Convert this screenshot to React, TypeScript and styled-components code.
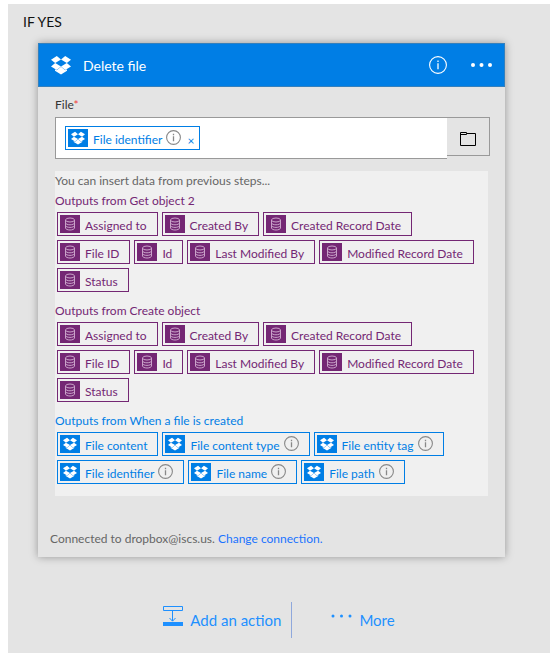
import React from "react";
import styled, { createGlobalStyle } from "styled-components";

const BLUE = "#007ee5";
const PURPLE = "#742774";
const LINK = "#1e90ff";

const GlobalStyle = createGlobalStyle`
  * { box-sizing: border-box; }
  body {
    margin: 0;
    background: #fff;
    font-family: Lato, "Open Sans", sans-serif;
    font-size: 12px;
    line-height: 20px;
    color: #333;
  }
  button { font: inherit; color: inherit; background: none; border: 0; padding: 0; cursor: pointer; }
  svg { display: block; flex: none; }
`;

const Branch = styled.main`
  margin: 4px 7px 4px 8px;
  padding: 8px 45px 15px 30px;
  background: #e4e4e4;
`;

const BranchTitle = styled.h1`
  margin: 0 0 11px -15px;
  font-size: 14px;
  line-height: 20px;
  font-weight: 400;
  color: #111;
`;

const Card = styled.section`
  background: #e4e4e4;
  box-shadow: 0 0 8px rgba(0, 0, 0, 0.35);
`;

const CardHeader = styled.header`
  display: flex;
  align-items: center;
  height: 44px;
  padding: 0 12px;
  border: 1px solid #3480bd;
  background: ${BLUE};
  color: #fff;
`;

const CardTitle = styled.h2`
  flex: 1;
  margin: 0 0 0 12px;
  font-size: 14px;
  line-height: 20px;
  padding-top: 2px;
  font-weight: 400;
`;

const HeaderButton = styled.button`
  margin-left: 24px;
`;

const CardBody = styled.div`
  padding: 8px 15px 0 17px;
`;

const FieldLabel = styled.label`
  display: block;
  line-height: 20px;
  margin-bottom: 2px;
`;

const Required = styled.span`
  color: #f04040;
`;

const FieldRow = styled.div`
  display: flex;
  align-items: flex-start;
`;

const FieldBox = styled.div`
  flex: 1;
  display: flex;
  align-items: center;
  min-width: 0;
  height: 42px;
  padding: 0 9px;
  border: 1px solid #999;
  border-right: 0;
  background: #fff;
`;

const FieldInput = styled.input`
  flex: 1;
  min-width: 0;
  border: 0;
  outline: 0;
  background: transparent;
  font: inherit;
`;

const BrowseButton = styled.button`
  display: flex;
  align-items: center;
  justify-content: center;
  width: 43px;
  height: 39px;
  padding-top: 4px;
  border: 1px solid #999;
  border-left: 0;
`;

const Outputs = styled.div`
  margin: 12px 2px 0 0;
  padding-bottom: 12px;
  background: #f0f0f0;
`;

const Hint = styled.p`
  margin: 0;
  color: #666;
`;

const Group = styled.section<{ $color: string }>`
  color: ${(p) => p.$color};
  & + & { margin-top: 9px; }
`;

const GroupTitle = styled.h3`
  margin: 0 0 1px;
  font-size: 12px;
  line-height: 20px;
  font-weight: 400;
`;

const TokenList = styled.div`
  display: flex;
  flex-wrap: wrap;
  gap: 4px;
  padding: 0 2px;
`;

const Token = styled.button`
  display: flex;
  height: 24px;
  padding: 2px 10px 2px 2px;
  border: 1px solid currentColor;
`;

const FieldToken = styled.span`
  display: flex;
  height: 24px;
  padding: 2px 5px 2px 2px;
  border: 1px solid currentColor;
  color: ${BLUE};
`;

const TokenIcon = styled.span<{ $color: string }>`
  display: flex;
  align-items: center;
  justify-content: center;
  width: 20px;
  height: 18px;
  margin-right: 5px;
  background: ${(p) => p.$color};
`;

const TokenText = styled.span`
  padding-top: 1px;
  line-height: 20px;
  white-space: nowrap;
`;

const TokenInfo = styled.span`
  margin: 1px 0 0 4px;
  color: #888;
`;

const RemoveButton = styled.button`
  margin-left: 6px;
  padding-top: 2px;
  line-height: 20px;
`;

const Connection = styled.footer`
  padding: 33px 12px 8px;
  color: #666;
`;

const ChangeLink = styled.a`
  color: #1a73ff;
  text-decoration: none;
`;

const Actions = styled.nav`
  display: flex;
  justify-content: center;
  margin: 45px -45px 0 -30px;
  color: ${LINK};
`;

const ActionButton = styled.button`
  display: flex;
  align-items: center;
  gap: 7px;
  height: 36px;
  font-size: 15px;
  white-space: nowrap;
`;

const ActionIcon = styled.span`
  display: flex;
  margin-bottom: 8px;
`;

const Divider = styled.span`
  width: 1px;
  height: 36px;
  margin: 0 39px 0 10px;
  background: #8fa8dc;
`;

function DropboxIcon({ size }: { size: number }) {
  return (
    <svg width={size} height={size} viewBox="0 0 20 20" fill="#fff" aria-hidden="true">
      <path d="M5.8 1 10 4.5 4.2 8.1 0 4.7z" />
      <path d="M14.2 1 10 4.5 15.8 8.1 20 4.7z" />
      <path d="M0 11.4 4.2 8.1 10 11.6 5.8 15z" />
      <path d="M20 11.4 15.8 8.1 10 11.6 14.2 15z" />
      <path d="M10 11.8 14.2 15.3 16 14.3V15.8L10 19.4 4 15.8V14.3L5.8 15.3z" />
    </svg>
  );
}

function DatabaseIcon() {
  return (
    <svg width="12" height="14" viewBox="0 0 12 14" fill="none" stroke="#c9a2c9" aria-hidden="true">
      <ellipse cx="6" cy="3" rx="4.5" ry="2" />
      <path d="M1.5 3v8c0 1.1 2 2 4.5 2s4.5-.9 4.5-2V3M1.5 5.8c0 1.1 2 2 4.5 2s4.5-.9 4.5-2M1.5 8.4c0 1.1 2 2 4.5 2s4.5-.9 4.5-2" />
    </svg>
  );
}

function InfoIcon({ size }: { size: number }) {
  return (
    <svg width={size} height={size} viewBox={`0 0 ${size} ${size}`} fill="none" stroke="currentColor" aria-hidden="true">
      <circle cx={size / 2} cy={size / 2} r={size / 2 - 0.6} strokeWidth="1.1" />
      <path
        d={size > 15 ? "M9 7.2v6M9 4.6v1.4" : "M7.5 6.2v5M7.5 3.8v1.4"}
        strokeWidth="1.3"
      />
    </svg>
  );
}

function DotsIcon({ width, radius }: { width: number; radius: number }) {
  return (
    <svg width={width} height="6" viewBox={`0 0 ${width} 6`} fill="currentColor" aria-hidden="true">
      <circle cx="2" cy="3" r={radius} />
      <circle cx={width / 2} cy="3" r={radius} />
      <circle cx={width - 2} cy="3" r={radius} />
    </svg>
  );
}

function FolderIcon() {
  return (
    <svg width="16" height="14" viewBox="0 0 16 14" fill="none" stroke="#000" aria-hidden="true">
      <path d="M.5 .5h6v1h9v12H.5zM.5 2.5h6v-1" />
    </svg>
  );
}

function AddActionIcon() {
  return (
    <svg width="20" height="20" viewBox="0 0 20 20" fill="none" stroke="currentColor" aria-hidden="true">
      <path d="M.5 .5h19v4H.5zM9.5 5v10M6.5 12l3 3.2 3-3.2" />
      <path d="M0 16h20v4H0z" fill="currentColor" stroke="none" />
    </svg>
  );
}

type Item = { name: string; info?: boolean };
type Source = { title: string; kind: "object" | "dropbox"; items: Item[] };

const objectItems: Item[] = [
  { name: "Assigned to" },
  { name: "Created By" },
  { name: "Created Record Date" },
  { name: "File ID" },
  { name: "Id" },
  { name: "Last Modified By" },
  { name: "Modified Record Date" },
  { name: "Status" },
];

const sources: Source[] = [
  { title: "Outputs from Get object 2", kind: "object", items: objectItems },
  { title: "Outputs from Create object", kind: "object", items: objectItems },
  {
    title: "Outputs from When a file is created",
    kind: "dropbox",
    items: [
      { name: "File content" },
      { name: "File content type", info: true },
      { name: "File entity tag", info: true },
      { name: "File identifier", info: true },
      { name: "File name", info: true },
      { name: "File path", info: true },
    ],
  },
];

function TokenContent({ item, kind }: { item: Item; kind: Source["kind"] }) {
  return (
    <>
      <TokenIcon $color={kind === "object" ? PURPLE : BLUE}>
        {kind === "object" ? <DatabaseIcon /> : <DropboxIcon size={14} />}
      </TokenIcon>
      <TokenText>{item.name}</TokenText>
      {item.info && (
        <TokenInfo>
          <InfoIcon size={15} />
        </TokenInfo>
      )}
    </>
  );
}

export default function App() {
  return (
    <>
      <GlobalStyle />
      <Branch>
        <BranchTitle>IF YES</BranchTitle>
        <Card>
          <CardHeader>
            <DropboxIcon size={20} />
            <CardTitle>Delete file</CardTitle>
            <HeaderButton aria-label="Information">
              <InfoIcon size={18} />
            </HeaderButton>
            <HeaderButton aria-label="Menu">
              <DotsIcon width={21} radius={2} />
            </HeaderButton>
          </CardHeader>
          <CardBody>
            <FieldLabel htmlFor="file">
              File<Required>*</Required>
            </FieldLabel>
            <FieldRow>
              <FieldBox>
                <FieldToken>
                  <TokenContent item={{ name: "File identifier", info: true }} kind="dropbox" />
                  <RemoveButton aria-label="Remove File identifier">×</RemoveButton>
                </FieldToken>
                <FieldInput id="file" type="text" />
              </FieldBox>
              <BrowseButton aria-label="Browse files">
                <FolderIcon />
              </BrowseButton>
            </FieldRow>
            <Outputs>
              <Hint>You can insert data from previous steps...</Hint>
              {sources.map((source) => (
                <Group key={source.title} $color={source.kind === "object" ? PURPLE : BLUE}>
                  <GroupTitle>{source.title}</GroupTitle>
                  <TokenList>
                    {source.items.map((item) => (
                      <Token key={item.name}>
                        <TokenContent item={item} kind={source.kind} />
                      </Token>
                    ))}
                  </TokenList>
                </Group>
              ))}
            </Outputs>
          </CardBody>
          <Connection>
            Connected to dropbox@iscs.us. <ChangeLink href="#connection">Change connection.</ChangeLink>
          </Connection>
        </Card>
        <Actions>
          <ActionButton>
            <ActionIcon>
              <AddActionIcon />
            </ActionIcon>
            Add an action
          </ActionButton>
          <Divider />
          <ActionButton>
            <ActionIcon>
              <DotsIcon width={21} radius={1.5} />
            </ActionIcon>
            More
          </ActionButton>
        </Actions>
      </Branch>
    </>
  );
}
